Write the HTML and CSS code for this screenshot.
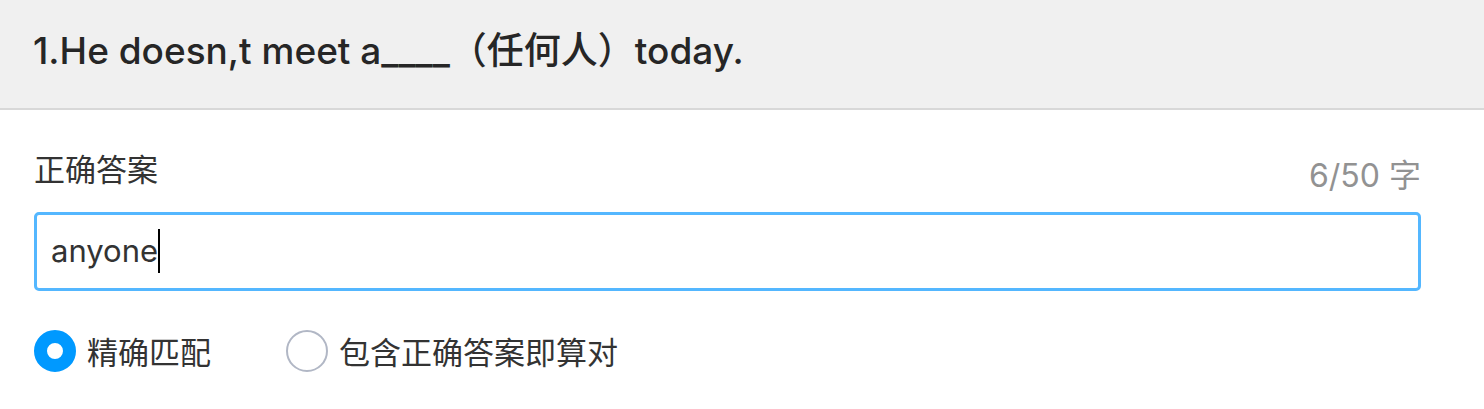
FILE: index.html
```html
<!DOCTYPE html>
<html lang="zh-CN">
<head>
<meta charset="utf-8">
<title>填空题</title>
<link rel="stylesheet" href="styles.css">
</head>
<body>
<header class="question">
<h1 class="question-title">1.He doesn,t meet a____（任何人）today.</h1>
</header>
<main class="answer">
<div class="answer-head">
<label class="answer-label" for="answer">正确答案</label>
<span class="counter">6/50 字</span>
</div>
<div class="field">
<input class="field-input" id="answer" type="text" value="anyone" maxlength="50" size="5">
<span class="caret"></span>
</div>
<div class="modes">
<label class="mode"><input class="mode-radio" type="radio" name="mode" checked><span class="mode-text">精确匹配</span></label>
<label class="mode"><input class="mode-radio" type="radio" name="mode"><span class="mode-text">包含正确答案即算对</span></label>
</div>
</main>
</body>
</html>
```
FILE: styles.css
```css
* { box-sizing: border-box; }
body {
  margin: 0;
  background: #fff;
  color: #333;
  font-family: Inter, "Noto Sans CJK SC", sans-serif;
  font-size: 31px;
}
.question {
  padding: 27px 33px 33px;
  background: #f0f0f0;
  border-bottom: 2px solid #d8d8d8;
}
.question-title {
  margin: 0;
  color: #262626;
  font-size: 37px;
  line-height: 48px;
  font-weight: 500;
}
.answer { padding: 40px 63px 32px 34px; }
.answer-head {
  display: flex;
  justify-content: space-between;
  align-items: flex-start;
  line-height: 40px;
  padding-bottom: 22px;
}
.counter {
  color: #929292;
  font-size: 32px;
  padding-top: 6px;
  margin-bottom: -6px;
}
.field {
  display: flex;
  align-items: center;
  height: 79px;
  padding: 0 14px 2px;
  border: 3px solid #54b7ff;
  border-radius: 5px;
}
.field-input {
  width: 107px;
  padding: 0;
  border: 0;
  outline: 0;
  background: none;
  color: inherit;
  font: inherit;
}
.caret {
  width: 2px;
  height: 44px;
  background: #000;
}
.modes {
  display: flex;
  gap: 75px;
  padding-top: 38px;
}
.mode {
  display: flex;
  align-items: center;
  gap: 11px;
  line-height: 44px;
}
.mode-text { padding-top: 2px; margin-bottom: -2px; }
.mode-radio {
  appearance: none;
  width: 42px;
  height: 42px;
  margin: 0;
  border: 2px solid #b1b7c5;
  border-radius: 50%;
  background: #fff;
}
.mode-radio:checked { border: 13px solid #0099ff; }
```
